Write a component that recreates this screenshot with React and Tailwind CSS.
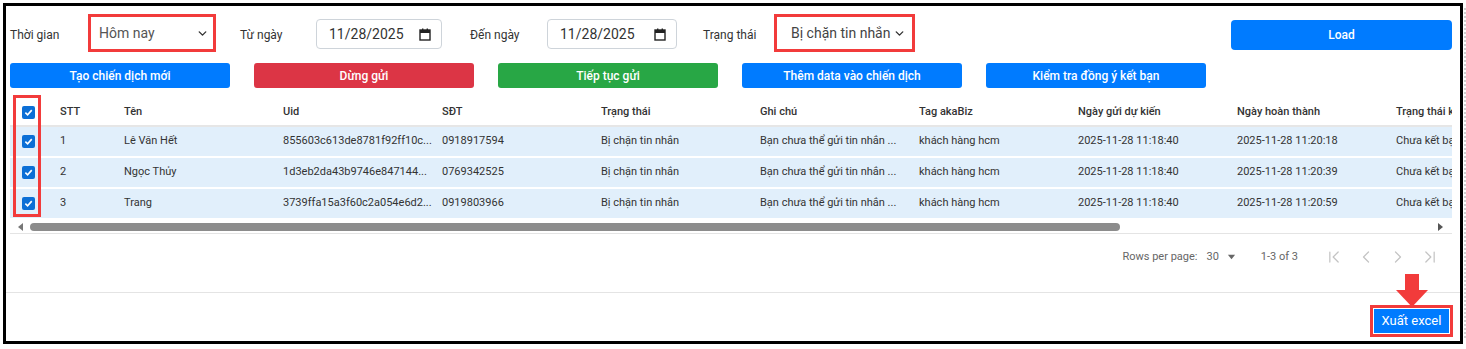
import React from 'react';
import { ChevronFirst, ChevronLeft, ChevronRight, ChevronLast, ChevronDown } from 'lucide-react';

const font = { fontFamily: 'Roboto, "Noto Sans", sans-serif' };

const rows = [
  { stt: 1, name: 'Lê Văn Hết', uid: '855603c613de8781f92ff10c...', phone: '0918917594', done: '2025-11-28 11:20:18' },
  { stt: 2, name: 'Ngọc Thủy', uid: '1d3eb2da43b9746e847144...', phone: '0769342525', done: '2025-11-28 11:20:39' },
  { stt: 3, name: 'Trang', uid: '3739ffa15a3f60c2a054e6d2...', phone: '0919803966', done: '2025-11-28 11:20:59' },
];

const columns = ['Tên', 'Uid', 'SĐT', 'Trạng thái', 'Ghi chú', 'Tag akaBiz', 'Ngày gửi dự kiến', 'Ngày hoàn thành', 'Trạng thái kết bạn'];

const CheckBox = () => (
  <div className="w-[13px] h-[13px] rounded-[2px] bg-[#0b6fd6] flex items-center justify-center">
    <svg width="9" height="9" viewBox="0 0 10 10" fill="none">
      <path d="M1.5 5.2 L4 7.6 L8.6 2.4" stroke="white" strokeWidth="1.8" />
    </svg>
  </div>
);

const CalendarIcon = () => (
  <svg width="12" height="13" viewBox="0 0 12 13" fill="none">
    <rect x="1" y="2" width="10" height="10" stroke="#222" strokeWidth="1.4" />
    <rect x="1" y="2" width="10" height="3" fill="#222" />
    <rect x="3" y="0.5" width="1.4" height="2" fill="#222" />
    <rect x="7.6" y="0.5" width="1.4" height="2" fill="#222" />
  </svg>
);

const DateBox = ({ width }) => (
  <div className={`${width} h-[30px] mt-[2px] border border-[#ced4da] rounded-[4px] flex items-center justify-between pl-[12px] pr-[10px] text-[14px] text-[#333]`}>
    <span>11/28/2025</span>
    <CalendarIcon />
  </div>
);

const ActionButton = ({ color, children }) => (
  <div className={`w-[220px] h-[25px] rounded-[3px] ${color} text-white text-[12px] font-medium flex items-center justify-center`}>
    {children}
  </div>
);

export default function App() {
  return (
    <div className="w-[1466px] h-[349px] bg-white flex text-[#333]" style={font}>
      <div className="mt-[3px] ml-[3px] w-[1460px] h-[341px] border-[3px] border-black flex flex-col">
        {/* filters */}
        <div className="flex items-center h-[38px] mt-[8px] pl-[4px] text-[12px]">
          <div className="w-[78px] pt-[4px]">Thời gian</div>
          <div className="w-[128px] h-[38px] border-[3px] border-[#f23b3b] flex items-center">
            <div className="flex-1 h-full flex items-center justify-between pl-[8px] pr-[4px] text-[14px] text-[#555]">
              <span>Hôm nay</span>
              <ChevronDown size={13} strokeWidth={2.6} color="#333" />
            </div>
          </div>
          <div className="w-[100px] pl-[24px] pt-[4px]">Từ ngày</div>
          <DateBox width="w-[126px]" />
          <div className="w-[105px] pl-[28px] pt-[4px]">Đến ngày</div>
          <DateBox width="w-[130px]" />
          <div className="w-[97px] pl-[26px] pt-[4px]">Trạng thái</div>
          <div className="w-[141px] h-[38px] border-[3px] border-[#f23b3b] flex items-center">
            <div className="flex-1 h-full flex items-center justify-between pl-[14px] pr-[6px] text-[14px] text-[#444] whitespace-nowrap">
              <span>Bị chặn tin nhắn</span>
              <ChevronDown size={13} strokeWidth={2.6} color="#333" />
            </div>
          </div>
          <div className="ml-auto mr-[8px] mt-[3px] w-[221px] h-[30px] rounded-[4px] bg-[#007bff] text-white text-[12px] font-medium flex items-center justify-center">
            Load
          </div>
        </div>

        {/* actions */}
        <div className="flex gap-[24px] mt-[11px] pl-[4px]">
          <ActionButton color="bg-[#007bff]">Tạo chiến dịch mới</ActionButton>
          <ActionButton color="bg-[#dc3545]">Dừng gửi</ActionButton>
          <ActionButton color="bg-[#28a745]">Tiếp tục gửi</ActionButton>
          <ActionButton color="bg-[#007bff]">Thêm data vào chiến dịch</ActionButton>
          <ActionButton color="bg-[#007bff]">Kiểm tra đồng ý kết bạn</ActionButton>
        </div>

        {/* table */}
        <div className="relative mt-[12px] ml-[4px] w-[1442px]">
          <div className="overflow-hidden w-[1442px]">
            <table className="table-fixed border-collapse text-[11px] w-[1533px]">
              <colgroup>
                <col className="w-[38px]" />
                <col className="w-[64px]" />
                {columns.map(c => (
                  <col key={c} className="w-[159px]" />
                ))}
              </colgroup>
              <thead>
                <tr className="h-[26px] border-b-2 border-[#e6e6e6]">
                  <th className="pl-[12px]"><CheckBox /></th>
                  <th className="text-left font-medium pl-[12px]">STT</th>
                  {columns.map(c => (
                    <th key={c} className="text-left font-medium pl-[12px] whitespace-nowrap overflow-hidden">{c}</th>
                  ))}
                </tr>
              </thead>
              <tbody>
                {rows.map(r => (
                  <tr key={r.stt} className="h-[31px] bg-[#e1effb] border-b-2 border-white">
                    <td className="pl-[12px]"><CheckBox /></td>
                    <td className="pl-[12px]">{r.stt}</td>
                    <td className="pl-[12px] whitespace-nowrap">{r.name}</td>
                    <td className="pl-[12px] whitespace-nowrap">{r.uid}</td>
                    <td className="pl-[12px]">{r.phone}</td>
                    <td className="pl-[12px] whitespace-nowrap">Bị chặn tin nhắn</td>
                    <td className="pl-[12px] whitespace-nowrap">Bạn chưa thể gửi tin nhắn ...</td>
                    <td className="pl-[12px] whitespace-nowrap">khách hàng hcm</td>
                    <td className="pl-[12px] whitespace-nowrap">2025-11-28 11:18:40</td>
                    <td className="pl-[12px] whitespace-nowrap">{r.done}</td>
                    <td className="pl-[12px] whitespace-nowrap overflow-hidden">Chưa kết bạn</td>
                  </tr>
                ))}
              </tbody>
            </table>
          </div>

          {/* scrollbar */}
          <div className="h-[14px] flex items-center border-b border-[#e4e4e4]">
            <svg width="14" height="10" viewBox="0 0 14 10" className="ml-[3px]">
              <path d="M10 1 L5 5 L10 9 Z" fill="#777" />
            </svg>
            <div className="ml-[3px] w-[1090px] h-[8px] rounded-full bg-[#8c8c8c]" />
            <svg width="14" height="10" viewBox="0 0 14 10" className="ml-auto mr-[4px]">
              <path d="M4 1 L9 5 L4 9 Z" fill="#555" />
            </svg>
          </div>

          {/* annotation around checkbox column */}
          <div className="absolute left-[3px] top-[-5px] w-[28px] h-[122px] border-[3px] border-[#f23b3b]" />
        </div>

        {/* pagination */}
        <div className="h-[59px] border-b border-[#e4e4e4]">
          <div className="h-[46px] flex items-center justify-end pr-[20px] text-[11px] text-[#666]">
            <span>Rows per page:</span>
            <span className="ml-[9px]">30</span>
            <svg width="9" height="6" viewBox="0 0 10 6" className="ml-[8px]">
              <path d="M1 0.5 L9 0.5 L5 5.5 Z" fill="#666" />
            </svg>
            <span className="ml-[25px]">1-3 of 3</span>
            <div className="flex items-center ml-[26px] gap-[12px] text-[#c4c4c4]">
              <ChevronFirst size={20} strokeWidth={1.5} />
              <ChevronLeft size={20} strokeWidth={1.5} />
              <ChevronRight size={20} strokeWidth={1.5} />
              <ChevronLast size={20} strokeWidth={1.5} />
            </div>
          </div>
        </div>

        {/* footer */}
        <div className="flex justify-end pt-[12px] pr-[7px]">
          <div className="relative border-[3px] border-[#f23b3b]">
            <div className="absolute left-1/2 -translate-x-1/2 bottom-full mb-[1px] flex flex-col items-center">
              <div className="w-[14px] h-[16px] bg-[#f23b3b]" />
              <div className="w-0 h-0 border-l-[16px] border-r-[16px] border-t-[17px] border-l-transparent border-r-transparent border-t-[#f23b3b]" />
            </div>
            <div className="m-[1px] w-[75px] h-[24px] bg-[#007bff] text-white text-[13px] flex items-center justify-center">
              Xuất excel
            </div>
          </div>
        </div>
      </div>
      <div className="ml-[1px] mt-[8px] h-[330px] border-l-2 border-dotted border-[#d0d0d0]" />
    </div>
  );
}
